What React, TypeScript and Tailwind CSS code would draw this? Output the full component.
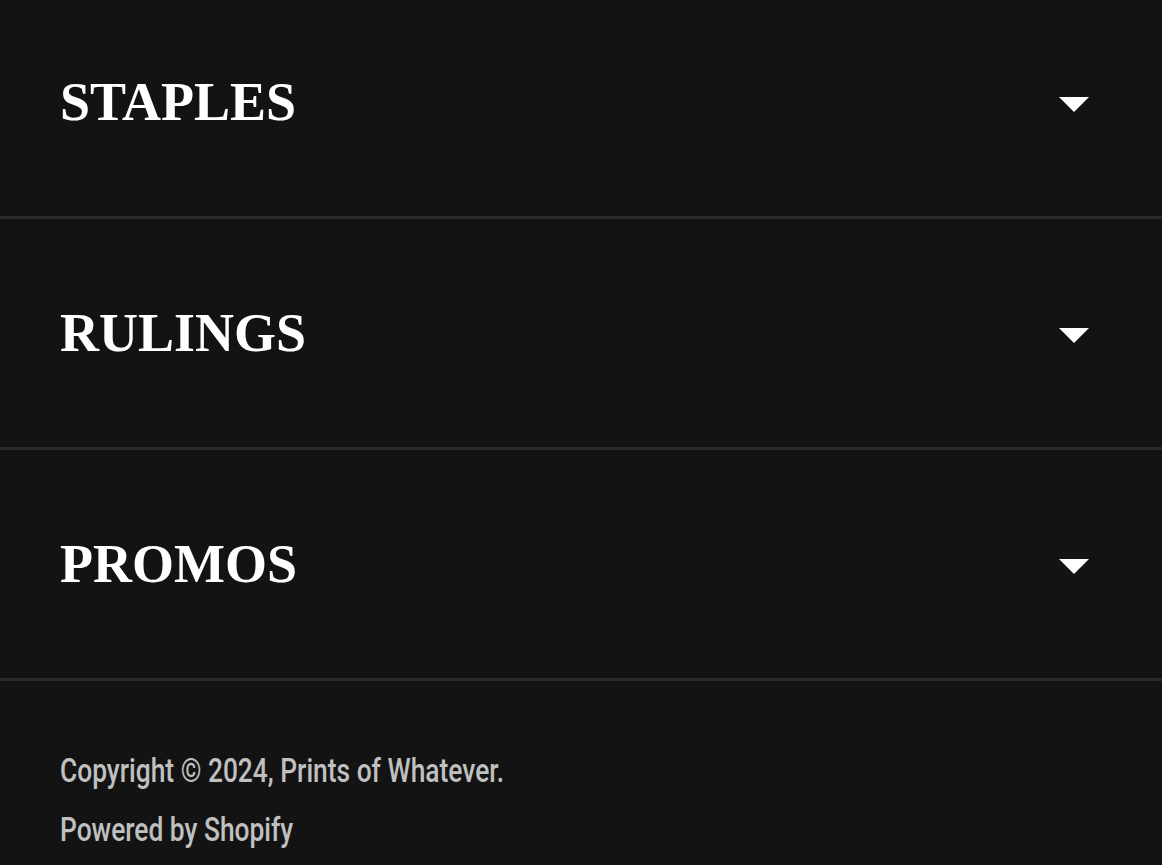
export default function App() {
  const items = ["STAPLES", "RULINGS", "PROMOS"];
  const footFont = { fontFamily: 'Roboto, "Liberation Sans", sans-serif' };
  return (
    <div className="w-[1162px] h-[865px] overflow-hidden bg-[#131313]">
      <div className="-mt-[12px]">
        {items.map((t) => (
          <div key={t} className="h-[231px] border-b-[3px] border-[#2a2a2a] flex items-center justify-between pl-[60px] pr-[73px]">
            <h2 className="text-white font-bold text-[54px] leading-none" style={{ fontFamily: '"Liberation Serif", "Times New Roman", serif' }}>
              {t}
            </h2>
            <svg width="30" height="15" viewBox="0 0 30 15" className="translate-y-[2px]">
              <polygon points="0,0 30,0 15,15" fill="#ffffff" />
            </svg>
          </div>
        ))}
      </div>
      <div className="pl-[60px] pt-[60px] text-[#c0c0c0]">
        <p className="text-[34px] leading-[59px] font-medium whitespace-nowrap origin-left scale-x-[0.775]" style={footFont}>
          Copyright © 2024, Prints of Whatever.
        </p>
        <p className="text-[34px] leading-[59px] font-medium whitespace-nowrap origin-left scale-x-[0.775]" style={footFont}>
          Powered by Shopify
        </p>
      </div>
    </div>
  );
}
